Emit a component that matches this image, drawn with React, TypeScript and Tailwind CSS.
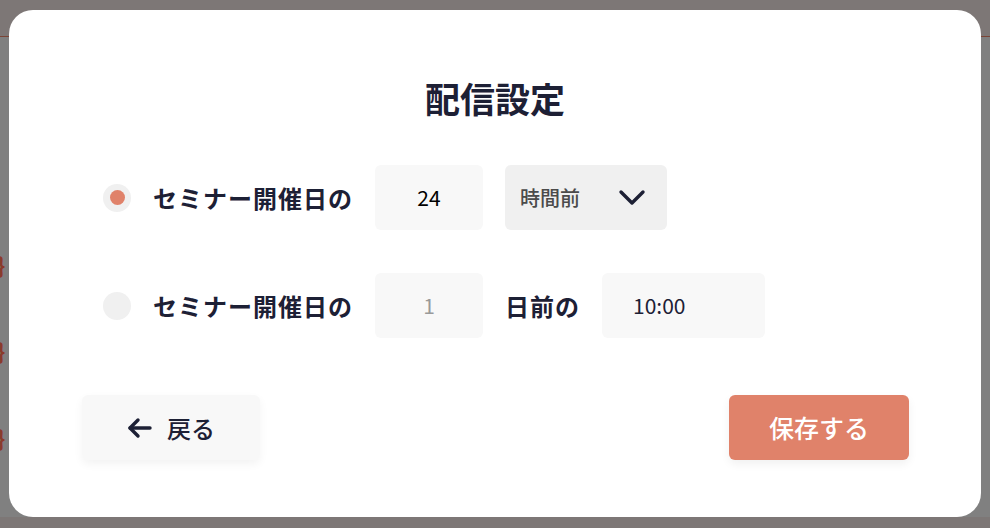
import { useState } from 'react';

const font = { fontFamily: '"Noto Sans CJK JP", "Noto Sans", sans-serif' };

function Radio({ checked }: { checked: boolean }) {
  return (
    <span className="flex h-[28px] w-[28px] shrink-0 items-center justify-center rounded-full bg-[#f0f0f0]">
      {checked && <span className="h-[15px] w-[15px] rounded-full bg-[#e0826a]" />}
    </span>
  );
}

function Label({ children }: { children: string }) {
  return <span className="whitespace-nowrap text-[24px] font-bold leading-none tracking-[1px] text-[#1d2035]">{children}</span>;
}

export default function App() {
  const [mode, setMode] = useState<'hours' | 'days'>('hours');

  return (
    <div className="relative h-[528px] w-[990px] overflow-hidden bg-[#808080]" style={font}>
      {/* page behind the overlay */}
      <div className="flex h-full flex-col">
        <div className="h-[37px] shrink-0 border-b border-[#7b4537] bg-[#7d7776]" />
        <div className="flex flex-1 flex-col pt-[216px] text-[22px] font-bold leading-none text-[#8b3b2c]">
          <span className="-ml-[3px] h-[86px]">{'}'}</span>
          <span className="-ml-[3px] h-[87px]">{'}'}</span>
          <span className="-ml-[3px]">{'}'}</span>
        </div>
        <div className="h-[11px] shrink-0 bg-[#7d7776]" />
      </div>

      {/* modal */}
      <div className="absolute left-[9px] top-[10px] flex h-[507px] w-[972px] flex-col rounded-[24px] bg-white px-[73px] pt-[70px]">
        <h1 className="text-center text-[35px] font-bold leading-none text-[#1d2035]">配信設定</h1>

        <div className="mt-[50px] flex flex-col gap-[43px] pl-[21px]">
          <div className="flex h-[65px] items-center gap-[22px]" onClick={() => setMode('hours')}>
            <Radio checked={mode === 'hours'} />
            <Label>セミナー開催日の</Label>
            <div className="flex h-[65px] w-[108px] items-center justify-center rounded-[6px] bg-[#f8f8f8] text-[21px] text-black">24</div>
            <div className="flex h-[65px] w-[162px] items-center justify-between rounded-[6px] bg-[#f0f0f0] pl-[15px] pr-[21px]">
              <span className="text-[20px] font-medium text-[#4b4b4b]">時間前</span>
              <svg width="28" height="18" viewBox="0 0 28 18" fill="none" stroke="#1d2035" strokeWidth="3.4" strokeLinecap="round" strokeLinejoin="round">
                <polyline points="3,3 14,14 25,3" />
              </svg>
            </div>
          </div>

          <div className="flex h-[65px] items-center gap-[22px]" onClick={() => setMode('days')}>
            <Radio checked={mode === 'days'} />
            <Label>セミナー開催日の</Label>
            <div className="flex h-[65px] w-[108px] items-center justify-center rounded-[6px] bg-[#f8f8f8] text-[21px] text-[#9a9a9a]">1</div>
            <Label>日前の</Label>
            <div className="flex h-[65px] w-[163px] items-center rounded-[6px] bg-[#f8f8f8] pl-[31px] text-[21px] text-[#1d2035]">10:00</div>
          </div>
        </div>

        <div className="mt-[57px] flex items-center justify-between">
          <button
            type="button"
            className="flex h-[65px] w-[178px] items-center justify-center gap-[14px] rounded-[6px] bg-[#f8f8f8] text-[24px] font-medium text-[#1d2035] shadow-[0_4px_10px_rgba(0,0,0,0.05)]"
          >
            <svg width="26" height="22" viewBox="0 0 26 22" fill="none" stroke="#1d2035" strokeWidth="3.4" strokeLinecap="round" strokeLinejoin="round">
              <line x1="3" y1="11" x2="23" y2="11" />
              <polyline points="11,3 3,11 11,19" />
            </svg>
            戻る
          </button>
          <button
            type="button"
            className="mr-[-1px] flex h-[65px] w-[180px] items-center justify-center rounded-[6px] bg-[#e0826a] text-[25px] font-medium text-white shadow-[0_4px_10px_rgba(0,0,0,0.06)]"
          >
            保存する
          </button>
        </div>
      </div>
    </div>
  );
}
